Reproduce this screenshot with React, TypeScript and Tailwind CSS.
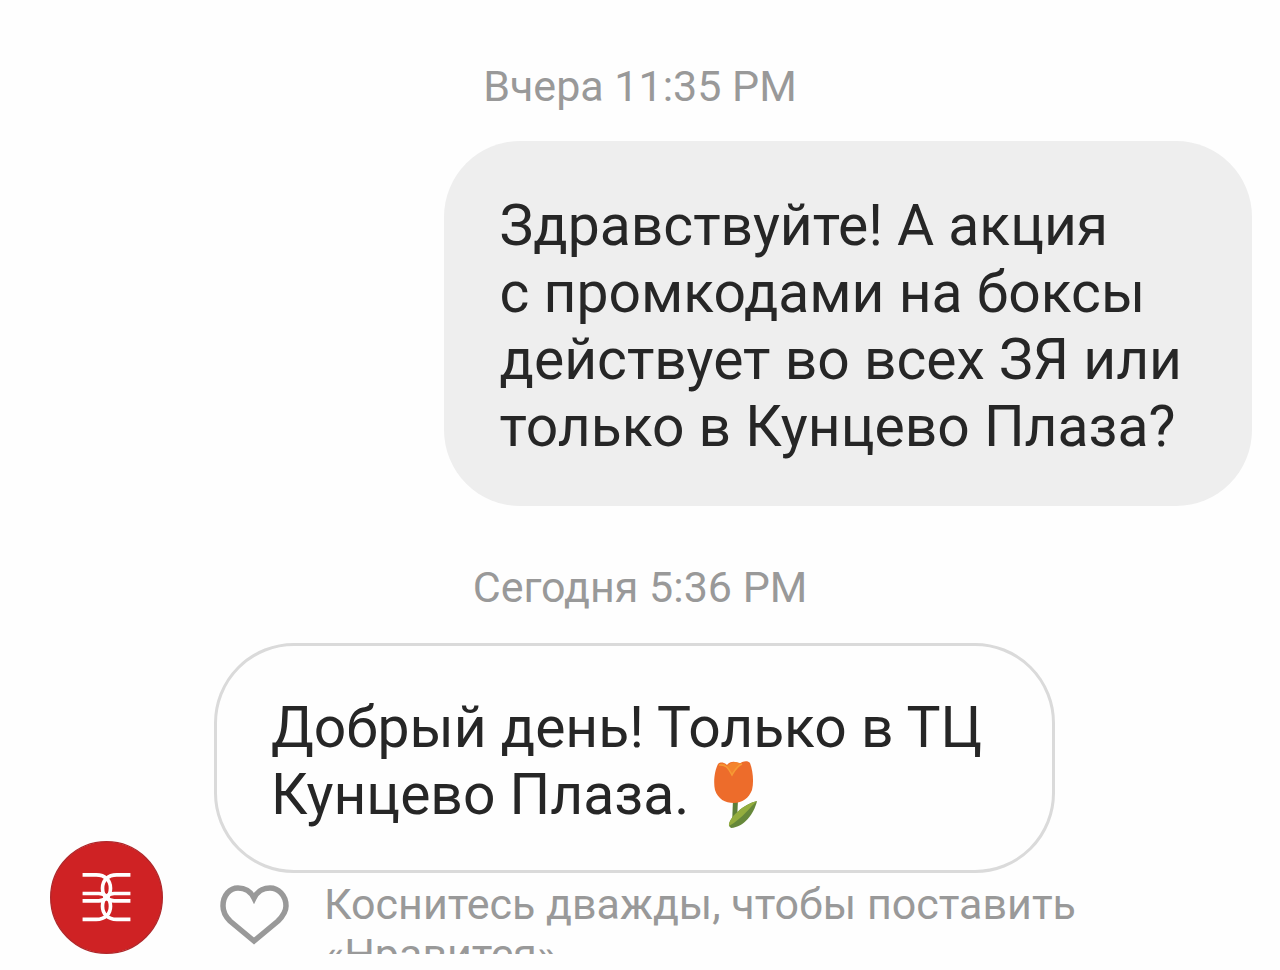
import type { ReactNode } from "react";

function DateLabel({ children }: { children: ReactNode }) {
  return <time className="block text-center text-[43px] leading-[52px] text-[#999999]">{children}</time>;
}

function Avatar() {
  return (
    <svg viewBox="31 33 340 340" className="size-[113px] shrink-0" role="img" aria-label="Аватар">
      <circle cx="201" cy="203" r="168" fill="#cf2224" stroke="#b0282b" strokeWidth="4" />
      <g fill="none" stroke="#ffffff" strokeWidth="11">
        <path d="M129 135H170C198 135 213 153 213 175C213 198 198 213 178 213H129" />
        <path d="M273 135H232C204 135 189 153 189 175C189 198 204 213 224 213H273" />
        <path d="M129 269H170C198 269 213 251 213 229C213 206 198 191 178 191H129" />
        <path d="M273 269H232C204 269 189 251 189 229C189 206 204 191 224 191H273" />
      </g>
    </svg>
  );
}

function Tulip() {
  return (
    <svg viewBox="0 0 67 67" className="inline-block size-[67px] align-top" role="img" aria-label="Тюльпан">
      <path d="M30 38H35L34 61L29 64Z" fill="#5d7f38" />
      <path d="M26 65C25 57 41 43 54 40C51 53 41 66 28 67Z" fill="#66883a" />
      <path d="M26 65C25 57 41 43 54 40C47 46 40 57 26 65Z" fill="#94ad3e" />
      <path d="M15 3C18 0 22 2 24 4C27 0 33 0 36 3C39 0 45 -1 47 2C50 10 51 21 49 29C46 37 39 42 31 42C22 42 15 38 12 29C10 20 12 9 15 3Z" fill="#ed6c2b" />
      <path d="M16 4C24 3 26 9 29 14C32 9 34 5 39 3C34 0 27 1 24 5C21 2 18 2 16 4Z" fill="#f4842d" />
      <path d="M16 4C24 3 26 9 29 14C32 9 34 5 39 3" fill="none" stroke="#f69a35" strokeWidth="1.5" />
    </svg>
  );
}

function Heart() {
  return (
    <svg viewBox="0 0 72 66" className="h-[66px] w-[72px]" fill="none" stroke="#999999" strokeWidth="5.5" aria-hidden="true">
      <path d="M36 58L12 38C7 33 5 28 5 23C5 12 12 5 20 5C28 5 33 9 36 15C39 9 44 5 52 5C60 5 68 12 68 23C68 28 65 33 60 38Z" />
    </svg>
  );
}

export default function App() {
  return (
    <main className="min-h-screen overflow-hidden bg-[#fefefe] pt-15 font-['Roboto','Noto_Sans',sans-serif] text-[#262626]">
      <DateLabel>Вчера 11:35 PM</DateLabel>
      <section className="mt-[29px] mr-7 flex justify-end">
        <p className="rounded-[76px] bg-[#eeeeee] pt-[51px] pr-[70px] pb-[46px] pl-14 text-[57px] leading-[67px]">
          Здравствуйте! А акция<br />с промкодами на боксы<br />действует во всех ЗЯ или<br />только в Кунцево Плаза?
        </p>
      </section>
      <div className="mt-[55px]">
        <DateLabel>Сегодня 5:36 PM</DateLabel>
      </div>
      <section className="mt-[30px] flex items-end gap-[51px] pl-[50px]">
        <Avatar />
        <div>
          <p className="w-fit rounded-[80px] border-3 border-[#dadada] pt-12 pr-[70px] pb-[42px] pl-[54px] text-[57px] leading-[67px]">
            Добрый день! Только в ТЦ<br />Кунцево Плаза. <Tulip />
          </p>
          <div className="flex items-start gap-[34px] pt-1.5 pl-1">
            <button type="button" aria-label="Нравится" className="mt-1">
              <Heart />
            </button>
            <p className="h-[75px] overflow-hidden text-[43px] leading-[50px] text-[#999999]">
              Коснитесь дважды, чтобы поставить<br />«Нравится»
            </p>
          </div>
        </div>
      </section>
    </main>
  );
}
